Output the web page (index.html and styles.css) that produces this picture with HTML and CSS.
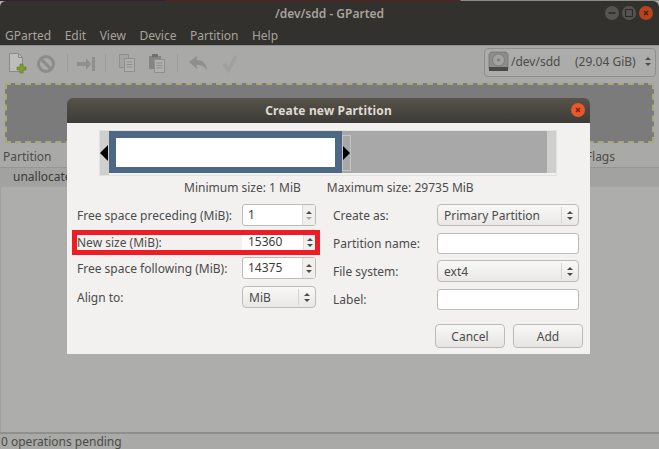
FILE: index.html
```html
<!DOCTYPE html>
<html lang="en">
<head>
  <meta charset="UTF-8" />
  <title>/dev/sdd - GParted</title>
  <link rel="stylesheet" href="styles.css">
</head>
<body>
  <div class="window">
    <div class="desktop-strip"></div>
    <header class="titlebar">
      <span class="title">/dev/sdd - GParted</span>
      <div class="win-buttons">
        <span class="win-btn"><svg width="10" height="10" viewBox="0 0 10 10"><path d="M1.5 5h7" stroke="#2b2b29" stroke-width="1.6"/></svg></span>
        <span class="win-btn"><svg width="10" height="10" viewBox="0 0 10 10"><rect x="1.5" y="1.5" width="7" height="7" fill="none" stroke="#2b2b29" stroke-width="1.2"/></svg></span>
        <span class="win-btn win-close"><svg width="10" height="10" viewBox="0 0 10 10"><path d="M3 3l4 4M7 3l-4 4" stroke="#4a1d0c" stroke-width="1.4"/></svg></span>
      </div>
    </header>
    <nav class="menubar">
      <span>GParted</span><span>Edit</span><span>View</span><span>Device</span><span>Partition</span><span>Help</span>
    </nav>
    <div class="toolbar">
      <div class="tools">
        <svg class="tool tool-new" width="20" height="22" viewBox="0 0 20 22"><path d="M1.5 1.5h9l4 4v14h-13z" fill="#bdbdbb" stroke="#8b8b89"/><path d="M10.5 1.5v4h4" fill="none" stroke="#8b8b89"/><path d="M12 12h3v3h3v3h-3v3h-3v-3H9v-3h3z" fill="#7f9f2f" stroke="#59751c" stroke-width=".6"/></svg>
        <svg class="tool tool-stop" width="20" height="20" viewBox="0 0 20 20"><circle cx="10" cy="10" r="7.5" fill="none" stroke="#8c8c8a" stroke-width="3"/><path d="M5 5l10 10" stroke="#8c8c8a" stroke-width="3"/></svg>
        <i class="sep sep-a"></i>
        <svg class="tool tool-resize" width="20" height="18" viewBox="0 0 20 18"><path d="M1 7h9V3l5 6-5 6v-4H1z" fill="#8f8f8d"/><rect x="16" y="2" width="3" height="14" fill="#8f8f8d"/></svg>
        <i class="sep sep-b"></i>
        <svg class="tool tool-copy" width="18" height="20" viewBox="0 0 18 20"><path d="M1.5 1.5h9v13h-9z" fill="#a4a4a2" stroke="#8e8e8c"/><path d="M6.5 5.5h10v13h-10z" fill="#b0b0ae" stroke="#8e8e8c"/><path d="M8.500 9h6M8.500 11.500h6M8.500 14h6" stroke="#8e8e8c"/></svg>
        <svg class="tool tool-paste" width="18" height="20" viewBox="0 0 18 20"><path d="M1 3h12v13H1z" fill="#858583"/><rect x="4" y="1" width="6" height="3" fill="#70706e"/><path d="M6.500 6.500h10v13h-10z" fill="#b0b0ae" stroke="#8e8e8c"/><path d="M8.500 10h6M8.500 12.500h6M8.500 15h6" stroke="#8e8e8c"/></svg>
        <i class="sep sep-c"></i>
        <svg class="tool tool-undo" width="20" height="18" viewBox="0 0 20 18"><path d="M1 7l8-6v4c6 0 10 4 10 11-2-4-5-6-10-6v4z" fill="#8f8f8d"/></svg>
        <svg class="tool tool-apply" width="18" height="20" viewBox="0 0 18 20"><path d="M1.500 11l3-2 3 4 6-12 3 1.500-8 16h-2z" fill="#a0a09e"/></svg>
      </div>
      <div class="device-combo">
        <svg width="21" height="21" viewBox="0 0 21 21"><path d="M3 1h15l2 2v15H1V3z" fill="#8d8d8b" stroke="#767674" stroke-width=".8"/><circle cx="10.500" cy="9" r="6" fill="#a3a3a1" stroke="#7d7d7b"/><circle cx="10.500" cy="9" r="1.600" fill="#7d7d7b"/><rect x="1" y="16" width="19" height="4" fill="#4a4a48"/></svg>
        <span class="device-name">/dev/sdd</span>
        <span class="device-size">(29.04 GiB)</span>
        <span class="updown dim"><b></b><b></b></span>
      </div>
    </div>
    <div class="disk-graph"></div>
    <div class="col-header"><span>Partition</span><span class="col-flags">Flags</span></div>
    <div class="tree-row">unallocated</div>
    <div class="tree-empty"></div>
    <footer class="statusbar">0 operations pending</footer>
  </div>

  <div class="dialog">
    <header class="dialog-title">
      <span>Create new Partition</span>
      <span class="dialog-close"><svg width="10" height="10" viewBox="0 0 10 10"><path d="M3 3l4 4M7 3l-4 4" stroke="#6b2409" stroke-width="1.4"/></svg></span>
    </header>
    <div class="dialog-body">
      <div class="part-graph">
        <div class="part-lead"></div>
        <div class="part-used"><div class="part-inner"></div></div>
        <div class="part-free"></div>
        <div class="part-tail"></div>
        <i class="handle handle-left"></i>
        <i class="handle handle-right"></i>
        <i class="handle-ghost"></i>
      </div>
      <div class="size-limits">
        <span>Minimum size: 1 MiB</span>
        <span>Maximum size: 29735 MiB</span>
      </div>
      <div class="form">
        <div class="form-col form-left">
          <div class="row">
            <label>Free space preceding (MiB):</label>
            <div class="spin"><span class="spin-val">1</span><span class="updown spin-arrows"><b></b><b class="off"></b></span></div>
          </div>
          <div class="row row-size">
            <label>New size (MiB):</label>
            <div class="spin spin-flat"><span class="spin-val">15360</span><span class="updown spin-arrows"><b></b><b></b></span></div>
          </div>
          <div class="row row-follow">
            <label>Free space following (MiB):</label>
            <div class="spin"><span class="spin-val">14375</span><span class="updown spin-arrows"><b></b><b></b></span></div>
          </div>
          <div class="row row-align">
            <label>Align to:</label>
            <div class="combo combo-small"><span>MiB</span><span class="updown combo-arrows"><b></b><b></b></span></div>
          </div>
        </div>
        <div class="form-col form-right">
          <div class="row">
            <label>Create as:</label>
            <div class="combo"><span>Primary Partition</span><span class="updown combo-arrows"><b></b><b></b></span></div>
          </div>
          <div class="row">
            <label>Partition name:</label>
            <div class="entry"></div>
          </div>
          <div class="row">
            <label>File system:</label>
            <div class="combo"><span>ext4</span><span class="updown combo-arrows"><b></b><b></b></span></div>
          </div>
          <div class="row">
            <label>Label:</label>
            <div class="entry"></div>
          </div>
        </div>
      </div>
      <div class="actions">
        <button class="btn">Cancel</button>
        <button class="btn">Add</button>
      </div>
      <div class="highlight"></div>
    </div>
  </div>
</body>
</html>
```
FILE: styles.css
```css
* {
  margin: 0;
  padding: 0;
  box-sizing: border-box;
}

html, body {
  height: 100%;
  overflow: hidden;
  font-family: "Noto Sans", "Open Sans", sans-serif;
  font-size: 12px;
  background-color: #a9a9a7;
}

.window {
  display: flex;
  flex-direction: column;
  height: 449px;
  color: #4c4c4a;
}

.desktop-strip {
  height: 1px;
  background: linear-gradient(to right, #3a1c33 0, #3a1c33 165px, #5a2020 166px, #5a2020 460px, #8a8a88 461px);
}

.titlebar {
  height: 26px;
  flex-shrink: 0;
  display: flex;
  align-items: center;
  justify-content: center;
  position: relative;
  padding-bottom: 2px;
  background-color: #33312d;
  border-radius: 6px 6px 0 0;
  color: #a5a39d;
  font-weight: 600;
}

.win-buttons {
  position: absolute;
  right: 6px;
  top: 5px;
  display: flex;
  gap: 3px;
}

.win-btn {
  width: 14px;
  height: 14px;
  border-radius: 50%;
  background-color: #565650;
  display: flex;
  align-items: center;
  justify-content: center;
}

.win-close {
  background-color: #b8441c;
}

.menubar {
  height: 18px;
  flex-shrink: 0;
  display: flex;
  gap: 13.5px;
  padding-left: 5px;
  padding-bottom: 2px;
  align-items: center;
  background-color: #33312d;
  color: #a5a39d;
}

.toolbar {
  height: 38px;
  flex-shrink: 0;
  display: flex;
  justify-content: space-between;
  padding: 2px 3px 0 8px;
  background-color: #a9a9a7;
  border-top: 1px solid #8f8f8d;
}

.tools {
  display: flex;
  align-items: flex-start;
  padding-top: 4px;
}

.tool-stop { margin-left: 8px; margin-top: 2px; }
.tool-resize { margin-left: 19px; margin-top: 3px; }
.tool-copy { margin-left: 21px; margin-top: 1px; }
.tool-paste { margin-left: 12px; margin-top: 1px; }
.tool-undo { margin-left: 21px; margin-top: 3px; }
.tool-apply { margin-left: 13px; margin-top: 2px; }

.sep {
  width: 1px;
  height: 18px;
  margin-top: 2px;
  background-color: #9b9b99;
}

.sep-a { margin-left: 11px; margin-right: -11px; }
.sep-b { margin-left: 9px; margin-right: -9px; }
.sep-c { margin-left: 11px; margin-right: -11px; }

.device-combo {
  width: 172px;
  height: 29px;
  display: flex;
  align-items: center;
  padding-left: 3px;
  padding-bottom: 2px;
  border: 1px solid #8f8f8d;
  border-radius: 4px;
  background-color: #acacaa;
}

.device-name {
  margin-left: 2px;
  width: 64px;
}

.updown {
  display: flex;
  flex-direction: column;
  gap: 3px;
}

.updown b {
  width: 0;
  height: 0;
  border-left: 3px solid transparent;
  border-right: 3px solid transparent;
  border-bottom: 3px solid #4c4c4a;
}

.updown b:last-child {
  border-bottom: 0;
  border-top: 3px solid #4c4c4a;
}

.updown b.off {
  border-top-color: #aaa;
}

.updown.dim {
  margin-left: 9px;
}

.disk-graph {
  height: 60px;
  flex-shrink: 0;
  margin: 0 5px 0 5px;
  background-color: #7b7b7b;
  border: 2px dashed #a8a878;
}

.col-header {
  height: 25px;
  flex-shrink: 0;
  display: flex;
  justify-content: space-between;
  align-items: center;
  padding: 2px 2px 0 3px;
  background-color: #a9a9a7;
  border-bottom: 1px solid #969694;
}

.col-flags {
  margin-right: 42px;
}

.tree-row {
  height: 19px;
  flex-shrink: 0;
  padding-left: 13px;
  line-height: 17px;
  color: #3a3a38;
  background-color: #a2a2a0;
}

.tree-empty {
  flex: 1;
  background-color: #adadab;
  border-left: 1px solid #a0a09e;
}

.statusbar {
  height: 17px;
  flex-shrink: 0;
  padding-left: 1px;
  line-height: 15px;
  border-top: 2px solid #8f8f8d;
  background-color: #a9a9a7;
}

.dialog {
  position: absolute;
  left: 67px;
  top: 98px;
  width: 523px;
  height: 256px;
  display: flex;
  flex-direction: column;
  color: #4c4c4c;
  border-radius: 6px 6px 0 0;
  overflow: hidden;
}

.dialog-title {
  height: 25px;
  flex-shrink: 0;
  display: flex;
  align-items: center;
  justify-content: center;
  position: relative;
  color: #dfdbd2;
  font-weight: 700;
  letter-spacing: 0.15px;
  background: linear-gradient(#57534a, #3c3b37);
}

.dialog-close {
  position: absolute;
  right: 5px;
  top: 5px;
  width: 14px;
  height: 14px;
  border-radius: 50%;
  background-color: #e9572a;
  display: flex;
  align-items: center;
  justify-content: center;
}

.dialog-body {
  flex: 1;
  position: relative;
  padding: 7px 7px 6px 10px;
  background-color: #f2f1f0;
}

.part-graph {
  position: relative;
  display: flex;
  width: 458px;
  height: 46px;
  margin-left: 22px;
  border: 1px solid #e2e2e0;
}

.part-lead {
  width: 9px;
  background-color: #cfcfcd;
}

.part-used {
  width: 233px;
  padding: 7px 7px 6px 7px;
  background-color: #4c6885;
  margin-bottom: 2px;
}

.part-inner {
  height: 100%;
  background-color: #fff;
}

.part-free {
  flex: 1;
  background-color: #a8a8a8;
  margin-bottom: 2px;
}

.part-tail {
  width: 9px;
  background-color: #cfcfcd;
  margin-bottom: 2px;
}

.handle {
  position: absolute;
  top: 14px;
  width: 0;
  height: 0;
  border-top: 8px solid transparent;
  border-bottom: 8px solid transparent;
}

.handle-left {
  left: 0;
  border-right: 8px solid #000;
}

.handle-right {
  left: 242px;
  border-left: 8px solid #000;
}

.handle-ghost {
  position: absolute;
  left: 242px;
  top: 4px;
  width: 9px;
  height: 36px;
  border: 1px solid #c4c4c4;
}

.size-limits {
  display: flex;
  gap: 26px;
  margin: 3px 0 0 107px;
  height: 17px;
  line-height: 17px;
}

.form {
  display: flex;
  margin-top: 8px;
}

.form-col {
  display: flex;
  flex-direction: column;
}

.form-left {
  width: 239px;
}

.form-right {
  width: 246px;
  margin-left: 17px;
}

.row {
  display: flex;
  align-items: center;
  justify-content: space-between;
  height: 22px;
}

.form-left .row-size {
  margin-top: 5px;
}

.form-left .row-follow {
  margin-top: 4px;
}

.form-left .row-align {
  margin-top: 7px;
}

.form-right .row {
  margin-bottom: 6px;
}

.spin {
  width: 74px;
  height: 22px;
  display: flex;
  border: 1px solid #bdbbb8;
  border-radius: 3px;
  background-color: #fff;
}

.spin-flat {
  border: 0;
}

.spin-val {
  flex: 1;
  padding-left: 5px;
  line-height: 20px;
  color: #3c3c3c;
}

.spin-flat .spin-val {
  line-height: 22px;
  padding-left: 6px;
}

.spin-arrows {
  width: 13px;
  align-items: center;
  justify-content: center;
  background-color: #f0efee;
  border-left: 1px solid #dedcda;
}

.combo {
  width: 142px;
  height: 22px;
  display: flex;
  align-items: center;
  justify-content: space-between;
  padding-left: 6px;
  border: 1px solid #bdbbb8;
  border-radius: 4px;
  background: linear-gradient(#f8f8f7, #e9e8e6);
}

.combo-small {
  width: 74px;
}

.combo-arrows {
  width: 17px;
  height: 16px;
  align-items: center;
  justify-content: center;
  border-left: 1px solid #d6d4d1;
}

.entry {
  width: 142px;
  height: 21px;
  border: 1px solid #bdbbb8;
  border-radius: 3px;
  background-color: #fff;
}

.actions {
  position: absolute;
  right: 7px;
  top: 201px;
  display: flex;
  gap: 8px;
}

.btn {
  width: 70px;
  height: 24px;
  font-family: inherit;
  font-size: 12px;
  color: #4c4c4c;
  border: 1px solid #bdbbb8;
  border-radius: 4px;
  background: linear-gradient(#f8f8f7, #e6e5e3);
}

.highlight {
  position: absolute;
  left: 5px;
  top: 107px;
  width: 248px;
  height: 25px;
  border: 5px solid #ee1c25;
}
```
